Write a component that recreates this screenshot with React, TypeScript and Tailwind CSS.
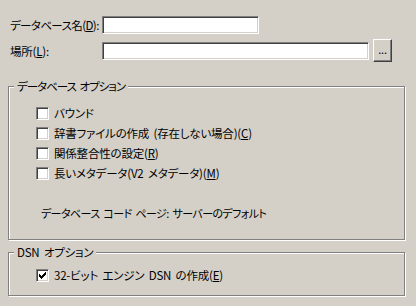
import React from "react";

const font = { fontFamily: '"Noto Sans CJK JP", "Noto Sans", sans-serif' };

function Check({ checked = false }: { checked?: boolean }) {
  const cols = [2, 3, 4, 3, 2, 1, 0];
  return (
    <div className="w-[13px] h-[13px] shrink-0 box-border bg-white border border-t-[#808080] border-l-[#808080] border-b-white border-r-white shadow-[inset_1px_1px_0_#404040,inset_-1px_-1px_0_#d4d0c8] relative">
      {checked && (
        <svg width="13" height="13" viewBox="0 0 13 13" className="absolute left-[-1px] top-[-1px]" shapeRendering="crispEdges">
          {cols.map((r, i) => (
            <rect key={i} x={3 + i} y={3 + r} width="1" height="3" fill="#000" />
          ))}
        </svg>
      )}
    </div>
  );
}

function Field({ w }: { w: string }) {
  return (
    <div className={`${w} h-[18px] box-border bg-white border border-t-[#808080] border-l-[#808080] border-b-white border-r-white shadow-[inset_1px_1px_0_#404040,inset_-1px_-1px_0_#d4d0c8]`} />
  );
}

function U({ c }: { c: string }) {
  return <span className="underline underline-offset-[1px]">{c}</span>;
}

function Row({ children, checked }: { children: React.ReactNode; checked?: boolean }) {
  return (
    <div className="flex items-center h-[13px] gap-[5px]">
      <Check checked={checked} />
      <span className="leading-[13px] whitespace-nowrap">{children}</span>
    </div>
  );
}

export default function App() {
  return (
    <div className="w-[416px] h-[306px] bg-[#d4d0c8] text-black text-[11.5px] [font-feature-settings:'palt'] tracking-[-0.2px] [word-spacing:2px] overflow-hidden" style={font}>
      <div className="pt-[16px] pl-[10px] flex items-center">
        <span className="w-[92px] leading-[18px] whitespace-nowrap tracking-[-0.6px]">
          データベース名(<U c="D" />):
        </span>
        <Field w="w-[157px]" />
      </div>
      <div className="mt-[5px] pl-[10px] flex items-center h-[23px]">
        <span className="w-[92px] leading-[18px] whitespace-nowrap">
          場所(<U c="L" />):
        </span>
        <Field w="w-[267px]" />
        <div className="ml-[4px] w-[19px] h-[23px] box-border border border-t-white border-l-white border-b-[#404040] border-r-[#404040] shadow-[inset_-1px_-1px_0_#808080] flex items-center justify-center text-[11px] leading-none pb-[3px] [word-spacing:0]">
          ...
        </div>
      </div>

      <div className="mt-[24px] ml-[8px] w-[397px] h-[154px] box-border border border-[#808080] shadow-[inset_1px_1px_0_#fff,1px_1px_0_#fff] relative pt-[20px] pl-[27px]">
        <span className="absolute left-[5px] top-[-7px] px-[3px] bg-[#d4d0c8] leading-[13px] whitespace-nowrap tracking-[-1px]">
          データベース オプション
        </span>
        <div className="flex flex-col gap-[7px]">
          <Row>バウンド</Row>
          <Row>
            辞書ファイルの作成 (存在しない場合)(<U c="C" />)
          </Row>
          <Row>
            関係整合性の設定(<U c="R" />)
          </Row>
          <Row>
            長いメタデータ(V2 メタデータ)(<U c="M" />)
          </Row>
        </div>
        <div className="mt-[27px] pl-[5px] leading-[13px] whitespace-nowrap text-[11px] tracking-[-0.6px]">
          データベース コード ページ: サーバーのデフォルト
        </div>
      </div>

      <div className="mt-[12px] ml-[8px] w-[397px] h-[44px] box-border border border-[#808080] shadow-[inset_1px_1px_0_#fff,1px_1px_0_#fff] relative pt-[16px] pl-[27px]">
        <span className="absolute left-[5px] top-[-7px] px-[3px] bg-[#d4d0c8] leading-[13px] whitespace-nowrap">
          DSN オプション
        </span>
        <Row checked>
          32-ビット エンジン DSN の作成(<U c="E" />)
        </Row>
      </div>
    </div>
  );
}
